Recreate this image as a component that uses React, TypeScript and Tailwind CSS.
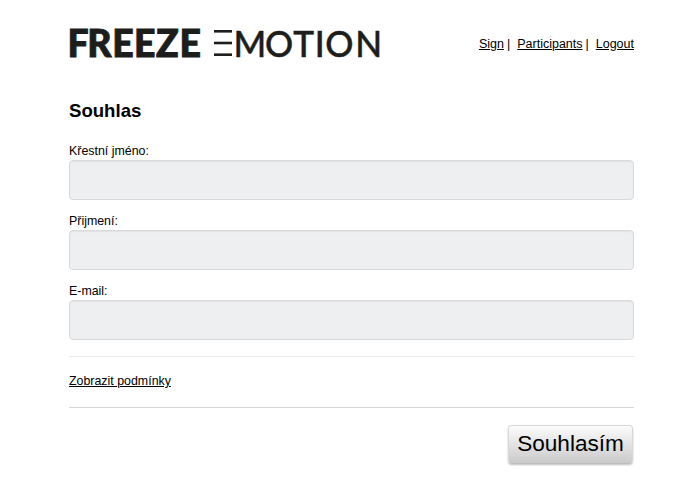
import { useState } from "react"

const fields = [
  { name: "firstName", label: "Křestní jméno:", type: "text" },
  { name: "lastName", label: "Přijmení:", type: "text" },
  { name: "email", label: "E-mail:", type: "email" },
]

function Logo() {
  return (
    <svg width="316" height="32" viewBox="0 0 316 32" fill="#1d1d1b" stroke="#1d1d1b" className="block overflow-visible" aria-label="Freeze Emotion">
      <text
        x="-1.5 18.2 43.2 64.9 87 110.5"
        y="27.6"
        strokeWidth="0.9"
        className="font-['Lato',sans-serif] text-[37.4px] font-black"
      >
        FREEZE
      </text>
      {/* the E of "Emotion" is three loose bars */}
      <g stroke="none">
        <rect x="145" y="1" width="18" height="2.6" />
        <rect x="145" y="12.7" width="18" height="2.6" />
        <rect x="145" y="24.4" width="18" height="2.6" />
      </g>
      <text
        x="173.2 206.2 236.1 258.8 269.7 301.3"
        y="27.6"
        transform="scale(0.95 1)"
        strokeWidth="0.5"
        className="font-['Lato',sans-serif] text-[37px] font-medium"
      >
        MOTION
      </text>
    </svg>
  )
}

export default function App() {
  const [values, setValues] = useState<Record<string, string>>({})

  return (
    <div className="h-[498px] bg-white pl-[69px] pr-[66px] pt-[29px] font-['Liberation_Sans',Arial,sans-serif] text-[12.4px] leading-[16px] text-black">
      <header className="flex h-[30px] items-start justify-between">
        <Logo />
        <nav className="flex pt-[7px] text-[12.5px]">
          <a href="#" className="underline">Sign</a>
          <span className="ml-[3px] mr-[7px]">|</span>
          <a href="#" className="underline">Participants</a>
          <span className="ml-[3px] mr-[7px]">|</span>
          <a href="#" className="underline">Logout</a>
        </nav>
      </header>

      <h1 className="mt-10 text-[18.6px] font-bold leading-6">Souhlas</h1>

      <form className="mt-5" onSubmit={(e) => e.preventDefault()}>
        <div className="space-y-[13px]">
          {fields.map((field) => (
            <div key={field.name}>
              <label htmlFor={field.name} className="block h-[17px]">
                {field.label}
              </label>
              <input
                id={field.name}
                type={field.type}
                value={values[field.name] ?? ""}
                onChange={(e) => setValues({ ...values, [field.name]: e.target.value })}
                className="block h-10 w-full rounded-[4px] border border-[#d9dadb] bg-[#eeeff1] px-3 shadow-[inset_0_1px_1px_#e1e2e3] outline-none"
              />
            </div>
          ))}
        </div>

        <div className="mt-4 border-y border-t-[#ebebeb] border-b-[#d6d6d6] pb-[18px] pt-4">
          <a href="#" className="block w-fit underline">Zobrazit podmínky</a>
        </div>

        <div className="mt-[17px] flex justify-end">
          <button
            type="submit"
            className="mr-px h-[39px] w-[125px] rounded-[4px] border border-[#d8d8d8] border-b-[#bdbdbd] bg-linear-to-b from-[#fcfcfc] to-[#cacaca] pb-[2px] text-[22.6px] leading-[35px] shadow-[0_1px_2px_rgba(0,0,0,0.25)]"
          >
            Souhlasím
          </button>
        </div>
      </form>
    </div>
  )
}
